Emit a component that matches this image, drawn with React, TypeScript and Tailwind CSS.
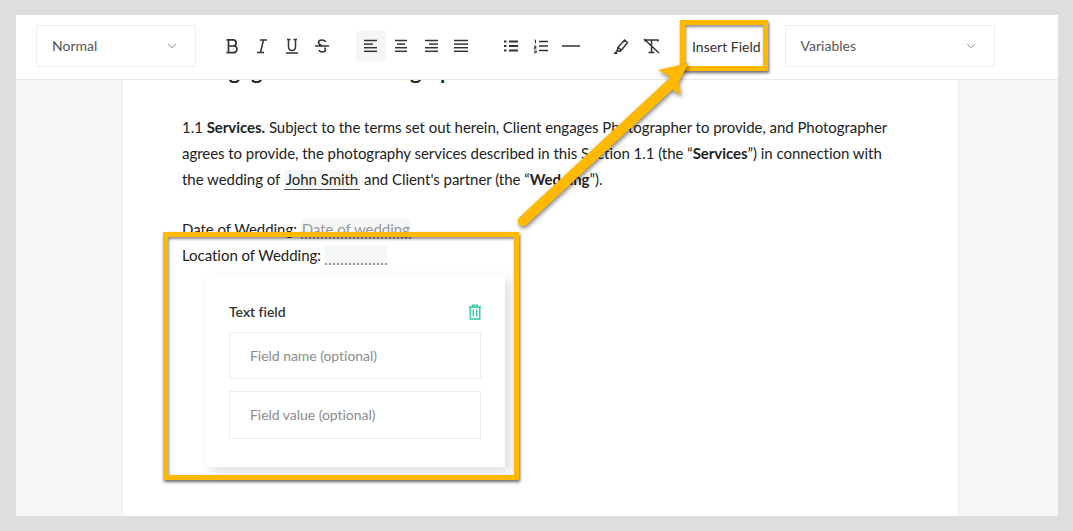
import { ChevronDown } from 'lucide-react'
import { ReactNode } from 'react'

const ink = '#333'

function Icon({ children }: { children: ReactNode }) {
  return (
    <svg width="18" height="18" viewBox="0 0 18 18" fill="none" stroke={ink} strokeWidth="1.5">
      {children}
    </svg>
  )
}

function ToolButton({ children, active }: { children: ReactNode; active?: boolean }) {
  return (
    <div className={`flex h-[30px] w-[30px] items-center justify-center ${active ? 'bg-[#f5f7f6]' : ''}`}>
      <Icon>{children}</Icon>
    </div>
  )
}

function Lines({ rows }: { rows: [number, number][] }) {
  return (
    <>
      {rows.map(([a, b], i) => (
        <path key={i} d={`M${a} ${3.5 + i * 3.6}H${b}`} />
      ))}
    </>
  )
}

function SelectBox({ label, width }: { label: string; width: string }) {
  return (
    <div className={`flex h-[42px] items-center justify-between border border-[#eeeeee] pb-[2px] pl-[15px] pr-4 text-[14px] text-[#555] ${width}`}>
      <span>{label}</span>
      <ChevronDown size={14} strokeWidth={1.5} className="mt-[2px] text-[#777]" />
    </div>
  )
}

function FieldInput({ placeholder, height }: { placeholder: string; height: string }) {
  return (
    <div className={`flex w-[252px] items-center border border-[#eeeeee] pl-5 text-[14px] text-[#8c8c8c] ${height}`}>
      {placeholder}
    </div>
  )
}

function Toolbar() {
  return (
    <div className="relative z-10 flex h-[65px] shrink-0 items-center border-b border-[#e8e8e8] bg-white pb-[2px] pl-5">
      <SelectBox label="Normal" width="w-[160px]" />
      <div className="ml-[21px] flex">
        <ToolButton>
          <path d="M3.500 2.800h6.500a3.100 3.100 0 0 1 0 6.200H5.500m0 0h5.200a3.300 3.300 0 0 1 0 6.600H3.500M5.500 2.800v12.800" strokeWidth="1.700" />
        </ToolButton>
        <ToolButton>
          <path d="M7 3h7M4 15.500h7M10.500 3 7.500 15.500" />
        </ToolButton>
        <ToolButton>
          <path d="M4 2.500h3.500M10.500 2.500H14M5.500 2.500V10a3.500 3.500 0 0 0 7 0V2.500M3 16h12" />
        </ToolButton>
        <ToolButton>
          <path d="M12.500 5C12 3.500 10.500 3 9 3 7 3 5.500 4 5.500 5.500 5.500 7 7 8 9 8.800M6 13c.5 1.500 1.800 2 3.200 2 2 0 3.300-1 3.300-2.500 0-.8-.4-1.400-1-1.900M2 9h14" />
        </ToolButton>
      </div>
      <div className="ml-[19px] flex">
        <ToolButton active>
          <Lines rows={[[2, 15], [2, 11], [2, 15], [2, 15]]} />
        </ToolButton>
        <ToolButton>
          <Lines rows={[[3, 15], [5, 13], [3, 15], [3, 15]]} />
        </ToolButton>
        <ToolButton>
          <Lines rows={[[3, 16], [7, 16], [3, 16], [3, 16]]} />
        </ToolButton>
        <ToolButton>
          <Lines rows={[[2, 16], [2, 16], [2, 16], [2, 16]]} />
        </ToolButton>
      </div>
      <div className="ml-5 flex">
        <ToolButton>
          <path d="M7 4.500h9M7 9h9M7 13.500h9M2 4.500h2.500M2 9h2.500M2 13.500h2.500" strokeWidth="2.200" />
        </ToolButton>
        <ToolButton>
          <path d="M7 4.500h9M7 9h9M7 13.500h9" />
          <path d="M2.500 3h1v3.500M2 9h2v1.500H2.300V12H4.500M2 14h2.300v1.700H2" strokeWidth="1" />
        </ToolButton>
        <ToolButton>
          <path d="M0 9h18" />
        </ToolButton>
      </div>
      <div className="ml-5 flex">
        <ToolButton>
          <path d="M6 10.500 12.500 3l3 2.500-6 7.500-3.500-2.500ZM6 10.500l-.8 3 3 .8.800-1.300" />
          <path d="M5 14l-2 2.200h2.500" />
        </ToolButton>
        <ToolButton>
          <path d="M3 4.500V3h13v1.500M9.500 3v12M6.500 15.500h6M2 2l15 14" />
        </ToolButton>
      </div>
      <div className="ml-[26px] text-[14px] text-[#333]">Insert Field</div>
      <div className="ml-[24px]">
        <SelectBox label="Variables" width="w-[210px]" />
      </div>
    </div>
  )
}

function Placeholder({ children, width }: { children?: ReactNode; width?: string }) {
  return (
    <span className={`inline-block h-[20px] border-b-2 border-dotted border-[#9a9a9a] bg-[#f5f7f6] text-[#999] leading-[20px] ${width ?? 'px-[1px]'}`}>
      {children}
    </span>
  )
}

function Doc() {
  return (
    <div className="ml-[106px] h-full w-[837px] overflow-hidden border-x border-[#eeeeee] bg-white pl-[59px] text-[15px] leading-[26px] tracking-[-0.04px] text-[#222]">
      <h2 className="-mt-[22px] whitespace-nowrap text-[21.500px] font-bold">1. Engagement of Photographer</h2>
      <p className="mt-[30px] whitespace-nowrap">
        1.1 <b>Services.</b> Subject to the terms set out herein, Client engages Photographer to provide, and Photographer
      </p>
      <p className="whitespace-nowrap">
        agrees to provide, the photography services described in this Section 1.1 (the “<b>Services</b>”) in connection with
      </p>
      <p className="whitespace-nowrap">
        the wedding of <span className="border-b border-[#555] bg-[#f5f7f6] px-[2px] pb-[1px]">John Smith</span> and Client's partner (the “<b>Wedding</b>”).
      </p>
      <p className="mt-[24px] whitespace-nowrap">
        Date of Wedding: <Placeholder>Date of wedding</Placeholder>
      </p>
      <p className="whitespace-nowrap">
        Location of Wedding: <Placeholder width="w-[62px] align-top mt-[3px]" />
      </p>
      <div className="ml-[23px] mt-[6px] h-[193px] w-[300px] bg-white px-6 pt-[26px] shadow-[6px_6px_12px_rgba(0,0,0,0.12)]">
        <div className="flex items-center justify-between text-[14px] font-semibold leading-[24px] text-[#333]">
          <span>Text field</span>
          <svg width="14" height="16" viewBox="0 0 14 16" fill="none" stroke="#2cc5a0" strokeWidth="1.300" className="mr-[-1px]">
            <path d="M1 3h12M4.500 3V1.200h5V3M2.200 3v12h9.600V3M5.300 5.500v7M8.700 5.500v7" />
          </svg>
        </div>
        <div className="mt-[8px] flex flex-col gap-[12px]">
          <FieldInput placeholder="Field name (optional)" height="h-[47px]" />
          <FieldInput placeholder="Field value (optional)" height="h-[48px]" />
        </div>
      </div>
    </div>
  )
}

export default function App() {
  const boxStyle =
    'absolute z-20 border-[5px] border-[#ffb900] shadow-[1px_2px_3px_rgba(0,0,0,0.6),inset_1px_2px_3px_rgba(0,0,0,0.45)]'

  return (
    <div
      className="relative h-[531px] w-[1073px] overflow-hidden bg-[#dedede] pb-[15px] pl-[16px] pr-[15px] pt-[15px]"
      style={{ fontFamily: 'Lato, sans-serif' }}
    >
      <div className="flex h-full flex-col overflow-hidden bg-[#f5f7f6]">
        <Toolbar />
        <div className="min-h-0 flex-1">
          <Doc />
        </div>
      </div>

      <div className={`${boxStyle} left-[680px] top-[20px] h-[51px] w-[88px]`} />
      <div className={`${boxStyle} left-[163px] top-[232px] h-[248px] w-[356px]`} />

      <svg className="absolute left-[510px] top-[55px] z-30 drop-shadow-[1px_2px_2px_rgba(0,0,0,0.5)]" width="190" height="180" viewBox="0 0 190 180" fill="none">
        <path d="M13 166 164 26" stroke="#ffb900" strokeWidth="10.500" strokeLinecap="round" />
        <path d="M179 8 148 15 160 22 156 30 164 36 171 40 168 28Z" fill="#ffb900" />
      </svg>
    </div>
  )
}
